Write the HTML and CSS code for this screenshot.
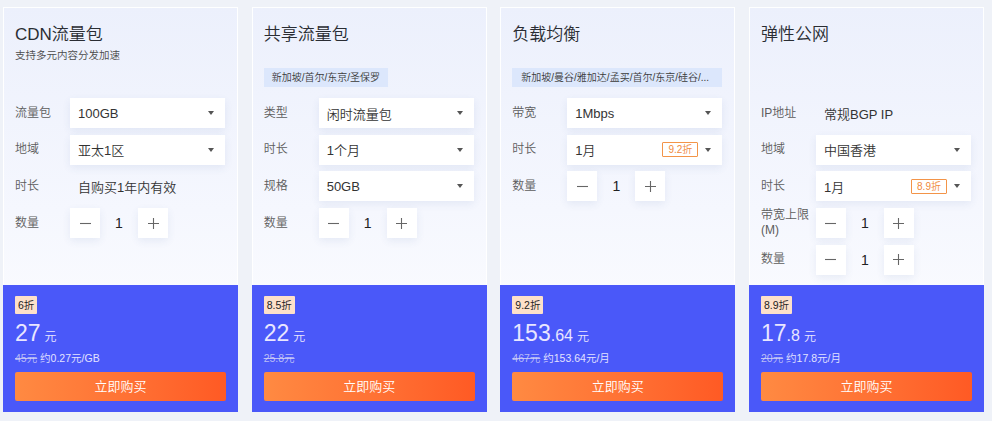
FILE: index.html
```html
<!DOCTYPE html>
<html lang="zh-CN">
<head>
<meta charset="utf-8">
<title>产品卡片</title>
<link rel="stylesheet" href="styles.css">
</head>
<body>
<div class="cards">

  <div class="card">
    <div class="top">
      <div class="head">
        <div class="title">CDN流量包</div>
        <div class="sub">支持多元内容分发加速</div>
      </div>
      <div class="rows">
        <div class="row"><div class="label">流量包</div><div class="select"><span class="val">100GB</span><i class="caret"></i></div></div>
        <div class="row"><div class="label">地域</div><div class="select"><span class="val">亚太1区</span><i class="caret"></i></div></div>
        <div class="row"><div class="label">时长</div><div class="static">自购买1年内有效</div></div>
        <div class="row"><div class="label">数量</div>
          <div class="stepper">
            <span class="sbtn"><svg width="11" height="11" viewBox="0 0 11 11"><path d="M0 5.5H11" stroke="#666" stroke-width="1.1"/></svg></span>
            <span class="num">1</span>
            <span class="sbtn"><svg width="11" height="11" viewBox="0 0 11 11"><path d="M0 5.5H11M5.5 0V11" stroke="#666" stroke-width="1.1"/></svg></span>
          </div>
        </div>
      </div>
    </div>
    <div class="buy">
      <span class="off">6折</span>
      <div class="price"><span class="big">27</span><span class="unit">元</span></div>
      <div class="note"><s>45元</s> 约0.27元/GB</div>
      <div class="btn">立即购买</div>
    </div>
  </div>

  <div class="card">
    <div class="top">
      <div class="head">
        <div class="title">共享流量包</div>
        <div class="tag">新加坡/首尔/东京/圣保罗</div>
      </div>
      <div class="rows">
        <div class="row"><div class="label">类型</div><div class="select"><span class="val">闲时流量包</span><i class="caret"></i></div></div>
        <div class="row"><div class="label">时长</div><div class="select"><span class="val">1个月</span><i class="caret"></i></div></div>
        <div class="row"><div class="label">规格</div><div class="select"><span class="val">50GB</span><i class="caret"></i></div></div>
        <div class="row"><div class="label">数量</div>
          <div class="stepper">
            <span class="sbtn"><svg width="11" height="11" viewBox="0 0 11 11"><path d="M0 5.5H11" stroke="#666" stroke-width="1.1"/></svg></span>
            <span class="num">1</span>
            <span class="sbtn"><svg width="11" height="11" viewBox="0 0 11 11"><path d="M0 5.5H11M5.5 0V11" stroke="#666" stroke-width="1.1"/></svg></span>
          </div>
        </div>
      </div>
    </div>
    <div class="buy">
      <span class="off">8.5折</span>
      <div class="price"><span class="big">22</span><span class="unit">元</span></div>
      <div class="note"><s>25.8元</s></div>
      <div class="btn">立即购买</div>
    </div>
  </div>

  <div class="card">
    <div class="top">
      <div class="head">
        <div class="title">负载均衡</div>
        <div class="tag wide">新加坡/曼谷/雅加达/孟买/首尔/东京/硅谷/...</div>
      </div>
      <div class="rows">
        <div class="row"><div class="label">带宽</div><div class="select"><span class="val">1Mbps</span><i class="caret"></i></div></div>
        <div class="row"><div class="label">时长</div><div class="select"><span class="val">1月</span><span class="badge">9.2折</span><i class="caret"></i></div></div>
        <div class="row"><div class="label">数量</div>
          <div class="stepper">
            <span class="sbtn"><svg width="11" height="11" viewBox="0 0 11 11"><path d="M0 5.5H11" stroke="#666" stroke-width="1.1"/></svg></span>
            <span class="num">1</span>
            <span class="sbtn"><svg width="11" height="11" viewBox="0 0 11 11"><path d="M0 5.5H11M5.5 0V11" stroke="#666" stroke-width="1.1"/></svg></span>
          </div>
        </div>
      </div>
    </div>
    <div class="buy">
      <span class="off">9.2折</span>
      <div class="price"><span class="big">153</span><span class="dec">.64</span><span class="unit">元</span></div>
      <div class="note"><s>467元</s> 约153.64元/月</div>
      <div class="btn">立即购买</div>
    </div>
  </div>

  <div class="card">
    <div class="top">
      <div class="head">
        <div class="title">弹性公网</div>
      </div>
      <div class="rows">
        <div class="row"><div class="label">IP地址</div><div class="static">常规BGP IP</div></div>
        <div class="row"><div class="label">地域</div><div class="select"><span class="val">中国香港</span><i class="caret"></i></div></div>
        <div class="row"><div class="label">时长</div><div class="select"><span class="val">1月</span><span class="badge">8.9折</span><i class="caret"></i></div></div>
        <div class="row"><div class="label two">带宽上限(M)</div>
          <div class="stepper">
            <span class="sbtn"><svg width="11" height="11" viewBox="0 0 11 11"><path d="M0 5.5H11" stroke="#666" stroke-width="1.1"/></svg></span>
            <span class="num">1</span>
            <span class="sbtn"><svg width="11" height="11" viewBox="0 0 11 11"><path d="M0 5.5H11M5.5 0V11" stroke="#666" stroke-width="1.1"/></svg></span>
          </div>
        </div>
        <div class="row"><div class="label">数量</div>
          <div class="stepper">
            <span class="sbtn"><svg width="11" height="11" viewBox="0 0 11 11"><path d="M0 5.5H11" stroke="#666" stroke-width="1.1"/></svg></span>
            <span class="num">1</span>
            <span class="sbtn"><svg width="11" height="11" viewBox="0 0 11 11"><path d="M0 5.5H11M5.5 0V11" stroke="#666" stroke-width="1.1"/></svg></span>
          </div>
        </div>
      </div>
    </div>
    <div class="buy">
      <span class="off">8.9折</span>
      <div class="price"><span class="big">17</span><span class="dec">.8</span><span class="unit">元</span></div>
      <div class="note"><s>20元</s> 约17.8元/月</div>
      <div class="btn">立即购买</div>
    </div>
  </div>

</div>
</body>
</html>
```
FILE: styles.css
```css
* { box-sizing: border-box; }
html, body { margin: 0; padding: 0; }
body {
  width: 992px;
  height: 421px;
  overflow: hidden;
  background: #eff2f8;
  font-family: "Liberation Sans", "Noto Sans CJK SC", sans-serif;
  font-weight: 350;
  color: #333;
}
.cards {
  display: flex;
  gap: 13.67px;
  padding: 7px 0 0 3px;
}
.card {
  width: 235px;
  height: 405px;
  display: flex;
  flex-direction: column;
  background: linear-gradient(180deg, #ecf0fc 0%, #f5f7fe 50%, #ffffff 100%);
  box-shadow: inset 0 0 0 1px rgba(255,255,255,0.95);
}
.top {
  flex: 1;
  padding: 16px 13px 0 12px;
}
.head {
  height: 75px;
}
.title {
  font-size: 17px;
  line-height: 24px;
  color: #2a2d33;
}
.sub {
  font-size: 10.5px;
  line-height: 16px;
  color: #4a4a4a;
}
.tag {
  display: inline-block;
  margin-top: 21px;
  height: 19px;
  line-height: 19px;
  padding: 0 8px;
  font-size: 10px;
  color: #3a3a3a;
  background: #dce7fc;
  white-space: nowrap;
}
.tag.wide {
  display: block;
  overflow: hidden;
  padding: 0 9px;
}
.rows {
  display: flex;
  flex-direction: column;
  gap: 6.7px;
}
.row {
  display: flex;
  align-items: center;
  height: 30px;
}
.label {
  width: 55px;
  flex: none;
  font-size: 12px;
  line-height: 15px;
  color: #5c5c5c;
}
.select {
  flex: 1;
  height: 30px;
  display: flex;
  align-items: center;
  padding: 0 11px 0 8px;
  background: #fff;
  box-shadow: 0 3px 8px rgba(60, 90, 160, 0.09);
}
.val {
  flex: 1;
  font-size: 13px;
  color: #333;
}
.caret {
  width: 0;
  height: 0;
  border-left: 3.5px solid transparent;
  border-right: 3.5px solid transparent;
  border-top: 4px solid #555;
  margin-left: 7px;
}
.badge {
  height: 15px;
  line-height: 13px;
  padding: 0 5px;
  font-size: 10px;
  color: #f08a3c;
  border: 1px solid #f39448;
  border-radius: 1px;
}
.static {
  padding-left: 8px;
  font-size: 13px;
  color: #333;
}
.stepper {
  display: flex;
  height: 30px;
}
.sbtn {
  width: 30px;
  height: 30px;
  display: flex;
  align-items: center;
  justify-content: center;
  background: #fff;
  box-shadow: 0 3px 8px rgba(60, 90, 160, 0.09);
}
.num {
  width: 38px;
  text-align: center;
  line-height: 30px;
  font-size: 14px;
  font-weight: 400;
  color: #222;
}
.buy {
  height: 127px;
  background: #4a58f9;
  padding: 10px 12px 0 12px;
  color: #e9e6ff;
}
.off {
  display: inline-block;
  height: 18px;
  line-height: 18px;
  padding: 0 3px;
  font-size: 10.5px;
  color: #222;
  background: #fde0ca;
  border-radius: 1px;
}
.price {
  margin-top: 4px;
  height: 30px;
  line-height: 30px;
  white-space: nowrap;
}
.big {
  font-size: 23px;
}
.dec {
  font-size: 16px;
}
.unit {
  font-size: 12px;
  margin-left: 4px;
}
.note {
  margin-top: 3px;
  height: 14px;
  line-height: 14px;
  font-size: 10.5px;
  color: #e3e3ff;
  white-space: nowrap;
}
.note s {
  color: rgba(215, 215, 245, 0.8);
}
.btn {
  margin-top: 7px;
  height: 29px;
  line-height: 29px;
  text-align: center;
  font-size: 13px;
  color: #fff;
  background: linear-gradient(90deg, #ff8a42 0%, #ff6e32 60%, #ff5a24 100%);
  border-radius: 2px;
}
```
